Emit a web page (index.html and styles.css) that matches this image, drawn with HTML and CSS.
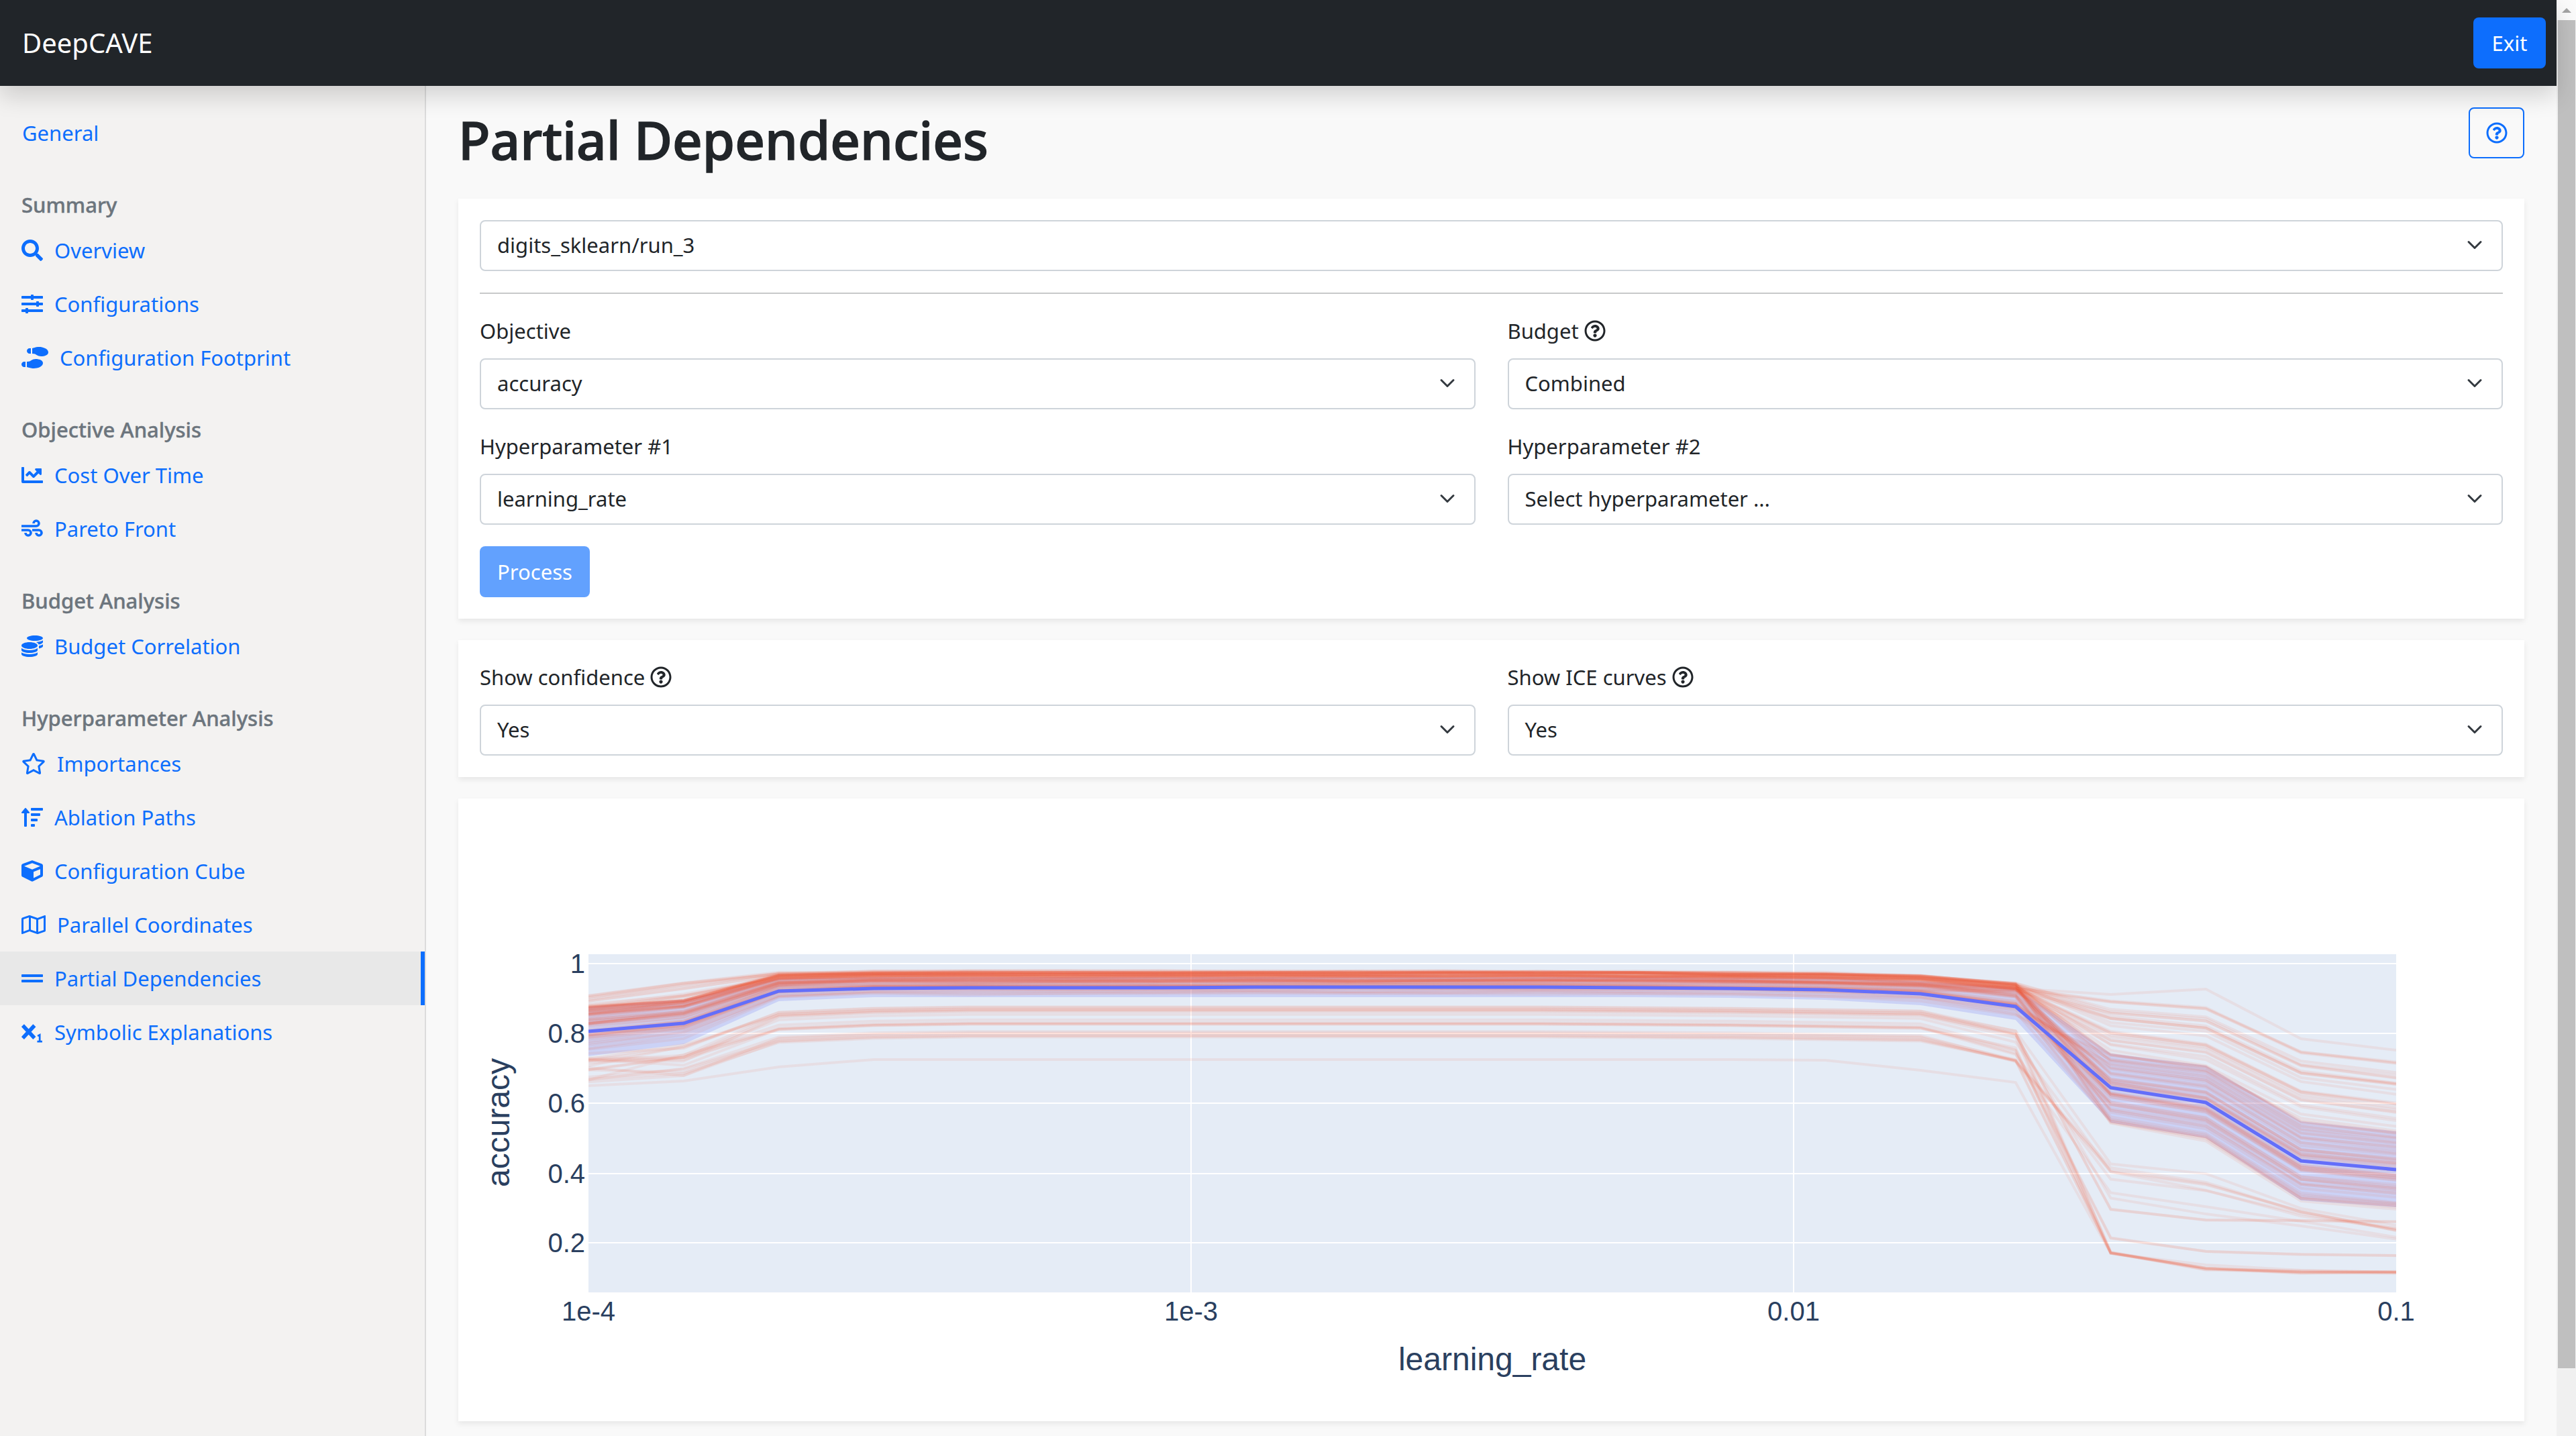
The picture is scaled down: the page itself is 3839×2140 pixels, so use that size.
FILE: index.html
```html
<!DOCTYPE html>
<html lang="en">
<head>
  <meta charset="UTF-8">
  <title>DeepCAVE - Partial Dependencies</title>
  <link rel="stylesheet" href="styles.css">
</head>
<body>
  <svg class="icon-defs" width="0" height="0">
    <symbol id="i-help" viewBox="0 0 512 512"><path d="M256 8C119.043 8 8 119.083 8 256c0 136.997 111.043 248 248 248s248-111.003 248-248C504 119.083 392.957 8 256 8zm0 448c-110.532 0-200-89.431-200-200 0-110.495 89.472-200 200-200 110.491 0 200 89.471 200 200 0 110.53-89.431 200-200 200zm107.244-255.2c0 67.052-72.421 68.084-72.421 92.863V300c0 6.627-5.373 12-12 12h-45.647c-6.627 0-12-5.373-12-12v-8.659c0-35.745 27.1-50.034 47.579-61.516 17.561-9.845 28.324-16.541 28.324-29.579 0-17.246-21.999-28.693-39.784-28.693-23.189 0-33.894 10.977-48.942 29.969-4.057 5.12-11.46 6.071-16.666 2.124l-27.824-21.098c-5.107-3.872-6.251-11.066-2.644-16.363C184.846 131.491 214.94 112 261.794 112c49.071 0 101.45 38.304 101.45 88.8zM298 368c0 23.159-18.841 42-42 42s-42-18.841-42-42 18.841-42 42-42 42 18.841 42 42z"/></symbol>
    <symbol id="i-chevron" viewBox="0 0 16 16"><path d="M2 5l6 6 6-6" fill="none" stroke="#343a40" stroke-width="2" stroke-linecap="round" stroke-linejoin="round"/></symbol>
  </svg>

  <div class="page">
    <header class="topbar">
      <span class="brand">DeepCAVE</span>
      <button class="btn-exit">Exit</button>
    </header>

    <div class="layout">
      <nav class="sidebar">
        <a class="nav-link">General</a>

        <h6 class="nav-heading">Summary</h6>
        <a class="nav-link"><svg class="nav-icon w32" viewBox="0 0 512 512"><path d="M505 442.7L405.3 343c-4.5-4.5-10.6-7-17-7H372c27.6-35.3 44-79.7 44-128C416 93.1 322.9 0 208 0S0 93.1 0 208s93.1 208 208 208c48.3 0 92.7-16.4 128-44v16.3c0 6.4 2.5 12.5 7 17l99.7 99.7c9.4 9.4 24.6 9.4 33.9 0l28.3-28.3c9.4-9.4 9.4-24.6.1-34zM208 336c-70.7 0-128-57.2-128-128 0-70.7 57.2-128 128-128 70.7 0 128 57.2 128 128 0 70.7-57.2 128-128 128z"/></svg>Overview</a>
        <a class="nav-link"><svg class="nav-icon w32" viewBox="0 0 512 512"><path d="M496 384H160v-16c0-8.8-7.2-16-16-16h-32c-8.8 0-16 7.2-16 16v16H16c-8.8 0-16 7.2-16 16v32c0 8.8 7.2 16 16 16h80v16c0 8.8 7.2 16 16 16h32c8.8 0 16-7.2 16-16v-16h336c8.8 0 16-7.2 16-16v-32c0-8.8-7.2-16-16-16zm0-160h-80v-16c0-8.8-7.2-16-16-16h-32c-8.8 0-16 7.2-16 16v16H16c-8.8 0-16 7.2-16 16v32c0 8.8 7.2 16 16 16h336v16c0 8.8 7.2 16 16 16h32c8.8 0 16-7.2 16-16v-16h80c8.8 0 16-7.2 16-16v-32c0-8.8-7.2-16-16-16zm0-160H288V48c0-8.8-7.2-16-16-16h-32c-8.8 0-16 7.2-16 16v16H16C7.2 64 0 71.2 0 80v32c0 8.8 7.2 16 16 16h208v16c0 8.8 7.2 16 16 16h32c8.8 0 16-7.2 16-16v-16h208c8.8 0 16-7.2 16-16V80c0-8.8-7.2-16-16-16z"/></svg>Configurations</a>
        <a class="nav-link"><svg class="nav-icon w40" viewBox="0 0 640 512"><path d="M192 160h32V32h-32c-35.35 0-64 28.65-64 64s28.65 64 64 64zM0 416c0 35.35 28.65 64 64 64h32V352H64c-35.35 0-64 28.65-64 64zm337.46-128c-34.91 0-76.16 13.12-104.73 32-24.79 16.38-44.52 32-104.73 32v128l57.53 15.97c26.21 7.28 53.01 13.12 80.31 15.05 32.69 2.31 65.6.67 97.58-6.2C472.9 481.3 512 429.22 512 384c0-64-84.01-96-174.54-96zM491.42 7.19C459.44.32 426.53-1.33 393.84.99c-27.3 1.93-54.1 7.77-80.31 15.04L256 32v128c60.2 0 79.94 15.62 104.73 32 28.57 18.88 69.82 32 104.73 32C555.99 224 640 192 640 128c0-45.22-39.1-97.3-148.58-120.81z"/></svg>Configuration Footprint</a>

        <h6 class="nav-heading">Objective Analysis</h6>
        <a class="nav-link"><svg class="nav-icon w32" viewBox="0 0 512 512"><path d="M496 384H64V80c0-8.84-7.16-16-16-16H16C7.16 64 0 71.16 0 80v336c0 17.67 14.33 32 32 32h464c8.84 0 16-7.16 16-16v-32c0-8.84-7.16-16-16-16zM464 96H345.94c-21.38 0-32.09 25.85-16.97 40.97l32.4 32.4L288 242.75l-73.37-73.37c-12.5-12.5-32.76-12.5-45.25 0l-68.69 68.69c-6.25 6.25-6.25 16.38 0 22.63l22.62 22.62c6.25 6.25 16.38 6.25 22.63 0L192 237.25l73.37 73.37c12.5 12.5 32.76 12.5 45.25 0l96-96 32.4 32.4c15.12 15.12 40.97 4.41 40.97-16.97V112c.01-8.84-7.15-16-15.99-16z"/></svg>Cost Over Time</a>
        <a class="nav-link"><svg class="nav-icon w32" viewBox="0 0 512 512"><path class="stroke-icon" d="M0 192H352a64 64 0 1 0-64-64M0 288H160a64 64 0 1 1-64 64M256 288H416a64 64 0 1 1-64 64"/></svg>Pareto Front</a>

        <h6 class="nav-heading">Budget Analysis</h6>
        <a class="nav-link"><svg class="nav-icon w32" viewBox="0 0 512 512"><path d="M0 405.3V448c0 35.3 86 64 192 64s192-28.7 192-64v-42.7C342.7 434.4 267.2 448 192 448S41.3 434.4 0 405.3zM320 128c106 0 192-28.7 192-64S426 0 320 0 128 28.7 128 64s86 64 192 64zM0 300.4V352c0 35.3 86 64 192 64s192-28.7 192-64v-51.6c-41.3 34-116.9 51.6-192 51.6S41.3 334.4 0 300.4zm416 11c57.3-11.1 96-31.7 96-55.4v-42.7c-23.2 16.4-57.3 27.6-96 34.5v63.6zM192 160C86 160 0 195.8 0 240s86 80 192 80 192-35.8 192-80-86-80-192-80zm219.3 56.3c60-10.8 100.7-32 100.7-56.3v-42.7c-35.5 25.1-96.5 38.6-160.7 41.8 29.5 14.3 51.2 33.5 60 57.2z"/></svg>Budget Correlation</a>

        <h6 class="nav-heading">Hyperparameter Analysis</h6>
        <a class="nav-link"><svg class="nav-icon w36" viewBox="0 0 576 512"><path d="M528.1 171.5L382 150.2 316.7 17.8c-11.7-23.6-45.6-23.9-57.4 0L194 150.2 47.9 171.5c-26.2 3.8-36.7 36.1-17.7 54.6l105.7 103-25 145.5c-4.5 26.3 23.2 46 46.4 33.7L288 439.6l130.7 68.7c23.2 12.2 50.9-7.4 46.4-33.7l-25-145.5 105.7-103c19-18.5 8.5-50.8-17.7-54.6zM388.6 312.3l23.7 138.4L288 385.4l-124.3 65.3 23.7-138.4-100.6-98 139-20.2 62.2-126 62.2 126 139 20.2-100.6 98z"/></svg>Importances</a>
        <a class="nav-link"><svg class="nav-icon w32" viewBox="0 0 512 512"><path d="M304 416h-64a16 16 0 0 0-16 16v32a16 16 0 0 0 16 16h64a16 16 0 0 0 16-16v-32a16 16 0 0 0-16-16zM16 160h48v304a16 16 0 0 0 16 16h32a16 16 0 0 0 16-16V160h48c14.21 0 21.39-17.24 11.31-27.31l-80-96a16 16 0 0 0-22.62 0l-80 96C-5.35 142.74 1.78 160 16 160zm416 0H240a16 16 0 0 0-16 16v32a16 16 0 0 0 16 16h192a16 16 0 0 0 16-16v-32a16 16 0 0 0-16-16zm-64 128H240a16 16 0 0 0-16 16v32a16 16 0 0 0 16 16h128a16 16 0 0 0 16-16v-32a16 16 0 0 0-16-16zM496 32H240a16 16 0 0 0-16 16v32a16 16 0 0 0 16 16h256a16 16 0 0 0 16-16V48a16 16 0 0 0-16-16z"/></svg>Ablation Paths</a>
        <a class="nav-link"><svg class="nav-icon w32" viewBox="0 0 512 512"><path d="M239.1 6.3l-208 78c-18.7 7-31.1 25-31.1 45v225.1c0 18.2 10.3 34.8 26.5 42.9l208 104c13.5 6.8 29.4 6.8 42.9 0l208-104c16.3-8.1 26.5-24.8 26.5-42.9V129.3c0-20-12.4-37.9-31.1-44.9l-208-78C262 2.2 250 2.2 239.1 6.3zM256 68.4l192 72v1.1l-192 78-192-78v-1.1l192-72zm32 356V275.5l160-65v133.9l-160 80z"/></svg>Configuration Cube</a>
        <a class="nav-link"><svg class="nav-icon w36" viewBox="0 0 576 512"><path d="M560.02 32c-1.96 0-3.98.37-5.96 1.16L384.01 96H384L212 35.28A64.252 64.252 0 0 0 191.76 32c-6.69 0-13.37 1.05-19.81 3.14L20.12 87.95A32.006 32.006 0 0 0 0 117.66v346.32C0 473.17 7.53 480 15.99 480c1.96 0 3.97-.37 5.96-1.16L192 416l172 60.71a63.98 63.98 0 0 0 40.05.15l151.83-52.81A31.996 31.996 0 0 0 576 394.34V48.02c0-9.19-7.53-16.02-15.98-16.02zM224 90.42l128 45.19v285.97l-128-45.19V90.42zM48 418.05V129.07l128-44.53v286.2l-.64.23L48 418.05zm480-35.13l-128 44.53V141.26l.64-.24L528 93.95v288.97z"/></svg>Parallel Coordinates</a>
        <a class="nav-link active"><svg class="nav-icon w32" viewBox="0 0 512 512"><path d="M496 288H16c-8.8 0-16 7.2-16 16v32c0 8.8 7.2 16 16 16h480c8.8 0 16-7.2 16-16v-32c0-8.8-7.2-16-16-16zm0-128H16c-8.8 0-16 7.2-16 16v32c0 8.8 7.2 16 16 16h480c8.8 0 16-7.2 16-16v-32c0-8.8-7.2-16-16-16z"/></svg>Partial Dependencies</a>
        <a class="nav-link"><svg class="nav-icon w32" viewBox="0 0 512 512"><path class="stroke-icon bold" d="M30 100L310 400M310 100L30 400"/><path class="stroke-icon thin" d="M385 350L435 325V480M375 480H495"/></svg>Symbolic Explanations</a>
      </nav>

      <main class="content">
        <div class="title-row">
          <h1>Partial Dependencies</h1>
          <button class="btn-help"><svg class="help-icon"><use href="#i-help"/></svg></button>
        </div>

        <section class="card">
          <div class="select-box"><span>digits_sklearn/run_3</span><svg class="chevron"><use href="#i-chevron"/></svg></div>
          <hr>
          <div class="field-grid">
            <div>
              <label>Objective</label>
              <div class="select-box"><span>accuracy</span><svg class="chevron"><use href="#i-chevron"/></svg></div>
            </div>
            <div>
              <label>Budget <svg class="label-help"><use href="#i-help"/></svg></label>
              <div class="select-box"><span>Combined</span><svg class="chevron"><use href="#i-chevron"/></svg></div>
            </div>
            <div>
              <label>Hyperparameter #1</label>
              <div class="select-box"><span>learning_rate</span><svg class="chevron"><use href="#i-chevron"/></svg></div>
            </div>
            <div>
              <label>Hyperparameter #2</label>
              <div class="select-box"><span>Select hyperparameter ...</span><svg class="chevron"><use href="#i-chevron"/></svg></div>
            </div>
          </div>
          <button class="btn-process">Process</button>
        </section>

        <section class="card">
          <div class="field-grid">
            <div>
              <label>Show confidence <svg class="label-help"><use href="#i-help"/></svg></label>
              <div class="select-box"><span>Yes</span><svg class="chevron"><use href="#i-chevron"/></svg></div>
            </div>
            <div>
              <label>Show ICE curves <svg class="label-help"><use href="#i-help"/></svg></label>
              <div class="select-box"><span>Yes</span><svg class="chevron"><use href="#i-chevron"/></svg></div>
            </div>
          </div>
        </section>

        <section class="card card-graph">
          <!-- viewBox uses page coordinates, the graph fills the whole card -->
          <svg class="graph" viewBox="683 1190 3079 928">
            <defs><clipPath id="plot-clip"><rect x="877" y="1422" width="2694" height="504"/></clipPath></defs>
            <rect class="plot-bg" x="877" y="1422" width="2694" height="504"/>
            <path class="grid" d="M877 1436H3571M877 1540H3571M877 1644H3571M877 1749H3571M877 1852H3571M1775 1422V1926M2673 1422V1926"/>
            <g id="curves" clip-path="url(#plot-clip)"></g>
            <g class="y-ticks">
              <text x="872" y="1450">1</text>
              <text x="872" y="1554">0.8</text>
              <text x="872" y="1658">0.6</text>
              <text x="872" y="1763">0.4</text>
              <text x="872" y="1866">0.2</text>
            </g>
            <g class="x-ticks">
              <text x="877" y="1968">1e-4</text>
              <text x="1775" y="1968">1e-3</text>
              <text x="2673" y="1968">0.01</text>
              <text x="3571" y="1968">0.1</text>
            </g>
            <text class="axis-title" x="2224" y="2042">learning_rate</text>
            <text class="axis-title" transform="translate(759 1673) rotate(-90)">accuracy</text>
          </svg>
        </section>
      </main>
    </div>
  </div>

  <div class="scrollbar">
    <div class="scroll-up"><span class="scroll-arrow"></span></div>
    <div class="scroll-thumb"></div>
  </div>

  <script src="chart.js"></script>
</body>
</html>
```

FILE: styles.css
```css
* {
  box-sizing: border-box;
}

html, body {
  height: 2140px;
  margin: 0;
  overflow: hidden;
}

body {
  display: flex;
  font-family: "Noto Sans", "Open Sans", sans-serif;
  font-size: 31px;
  line-height: 48px;
  color: #212529;
  background: #f9f9f9;
}

.icon-defs {
  position: absolute;
}

.page {
  width: 3810px;
  height: 2140px;
  display: flex;
  flex-direction: column;
}

/* top bar */
.topbar {
  position: relative;
  z-index: 2;
  height: 128px;
  flex: none;
  display: flex;
  align-items: center;
  justify-content: space-between;
  padding: 0 16px 0 33px;
  background: #212529;
  box-shadow: 0 16px 32px rgba(0,0,0,0.15);
}

.brand {
  font-size: 40px;
  color: white;
}

.btn-exit {
  width: 108px;
  height: 76px;
  padding: 0;
  border: none;
  border-radius: 8px;
  background: #0d6efd;
  color: white;
  font: inherit;
}

.layout {
  flex: 1;
  display: flex;
  min-height: 0;
}

/* sidebar */
.sidebar {
  width: 635px;
  flex: none;
  padding-top: 30px;
  background: #f3f2f1;
  border-right: 2px solid #dcdcdc;
}

.nav-link {
  height: 80px;
  display: flex;
  align-items: center;
  gap: 16px;
  padding-left: 33px;
  color: #0d6efd;
}

.nav-link.active {
  background: #e8e8e8;
  border-right: 6px solid #0d6efd;
}

.nav-heading {
  height: 55px;
  margin: 40px 0 0;
  padding: 3px 0 0 32px;
  font-size: 31px;
  font-weight: 500;
  color: #6c757d;
  -webkit-text-stroke: 0.4px #6c757d;
}

.nav-icon {
  height: 32px;
  flex: none;
  margin-left: -1px;
  margin-right: 1px;
  fill: #0d6efd;
}

.w32 { width: 32px; }
.w36 { width: 36px; }
.w40 { width: 40px; }

.stroke-icon {
  fill: none;
  stroke: #0d6efd;
  stroke-width: 58;
}

.stroke-icon.bold { stroke-width: 90; }
.stroke-icon.thin { stroke-width: 44; }

/* main column */
.content {
  flex: 1;
  min-width: 0;
  padding: 32px 48px 0;
}

.title-row {
  display: flex;
  justify-content: space-between;
  align-items: flex-start;
  margin-bottom: 40px;
}

h1 {
  margin: 0;
  font-size: 78px;
  line-height: 96px;
  font-weight: 500;
  -webkit-text-stroke: 1.4px #212529;
}

.btn-help {
  width: 83px;
  height: 76px;
  display: flex;
  align-items: center;
  justify-content: center;
  padding: 0;
  background: transparent;
  border: 2px solid #0d6efd;
  border-radius: 8px;
}

.help-icon {
  width: 32px;
  height: 32px;
  fill: #0d6efd;
}

.card {
  padding: 32px;
  margin-bottom: 32px;
  background: white;
  box-shadow: 0 4px 8px rgba(0,0,0,0.075);
}

hr {
  height: 2px;
  margin: 32px 0;
  border: none;
  background: #c8c9ca;
}

.field-grid {
  display: grid;
  grid-template-columns: 1fr 1fr;
  column-gap: 48px;
  row-gap: 32px;
}

label {
  display: flex;
  align-items: center;
  gap: 8px;
  height: 48px;
  margin-bottom: 16px;
  padding-bottom: 2px;
}

.label-help {
  width: 32px;
  height: 32px;
  fill: #212529;
}

.select-box {
  height: 76px;
  display: flex;
  align-items: center;
  justify-content: space-between;
  padding: 0 28px 2px 24px;
  background: white;
  border: 2px solid #ced4da;
  border-radius: 8px;
}

.chevron {
  width: 24px;
  height: 24px;
}

.btn-process {
  display: block;
  width: 164px;
  height: 76px;
  margin-top: 32px;
  padding: 0;
  border: none;
  border-radius: 8px;
  background: #62a1fe;
  color: white;
  font: inherit;
}

.card-graph {
  height: 928px;
  padding: 0;
}

/* graph */
.graph {
  display: block;
  width: 3079px;
  height: 928px;
  font-family: "Liberation Sans", sans-serif;
  fill: #2a3f5f;
}

.plot-bg {
  fill: #e5ecf6;
}

.grid {
  fill: none;
  stroke: white;
  stroke-width: 2;
}

.y-ticks text {
  font-size: 40px;
  text-anchor: end;
}

.x-ticks text {
  font-size: 40px;
  text-anchor: middle;
}

.axis-title {
  font-size: 48px;
  text-anchor: middle;
}

.band {
  fill: rgba(99,110,250,0.2);
  stroke: none;
}

.ice-line {
  fill: none;
  stroke: rgba(239,85,59,0.09);
  stroke-width: 4;
}

.mean-line {
  fill: none;
  stroke: #636efa;
  stroke-width: 5;
}

/* fake browser scrollbar */
.scrollbar {
  width: 29px;
  height: 2140px;
  flex: none;
  padding-left: 2px;
  background: #f0f0f0;
}

.scroll-up {
  height: 30px;
  margin-left: -2px;
  display: flex;
  align-items: center;
  justify-content: center;
  background: #fafafa;
}

.scroll-arrow {
  width: 0;
  height: 0;
  border-left: 7px solid transparent;
  border-right: 7px solid transparent;
  border-bottom: 7px solid #a3a3a3;
}

.scroll-thumb {
  width: 26px;
  height: 2009px;
  background: #bfbfbf;
}
```

FILE: chart.js
```js
// ICE curves + mean + confidence band for the partial dependence graph
const SVG_NS = "http://www.w3.org/2000/svg";
const curves = document.getElementById("curves");

function knotX(i) {
  return 877 + (2694 / 19) * i;
}

function points(ys) {
  return ys.map((y, i) => knotX(i).toFixed(1) + "," + y.toFixed(1)).join(" ");
}

function addShape(tag, cls, pts) {
  const el = document.createElementNS(SVG_NS, tag);
  el.setAttribute("class", cls);
  el.setAttribute("points", pts);
  curves.appendChild(el);
}

// small seeded generator so the picture is the same on every load
let seed = 1234567;
function rand() {
  seed = (seed * 16807) % 2147483647;
  return seed / 2147483647;
}

const mean = [1537,1525,1477,1473,1472,1472,1472,1471,1471,1471,1471,1472,1473,1475,1481,1500,1621,1643,1730,1743];
const bandTop = [1500,1490,1458,1456,1456,1456,1456,1456,1456,1456,1456,1456,1457,1458,1462,1472,1570,1588,1671,1686];
const bandBottom = [1574,1556,1492,1486,1486,1486,1486,1486,1486,1486,1486,1486,1487,1490,1498,1520,1673,1696,1789,1799];

addShape("polygon", "band", points(bandTop) + " " + bandBottom.map((y, i) => knotX(i).toFixed(1) + "," + y).reverse().join(" "));

function family(count, top, bottom, skew, split) {
  for (let n = 0; n < count; n++) {
    const t = Math.pow(rand(), skew);
    const t2 = rand();
    const ys = top.map((hi, i) => {
      const pos = i >= split ? t2 : t;
      return hi + (bottom[i] - hi) * pos + (rand() - 0.5) * 3;
    });
    addShape("polyline", "ice-line", points(ys));
  }
}

// a curve on the low plateau: the left part is free, the tail is given (knots 16-19)
function lowCurve(tail, jitter) {
  const p = 1498 + rand() * 48;
  const ys = [p + 50 + rand() * 35, p + 45 + rand() * 30, p + 8, p + 2, p, p, p, p, p, p, p, p + 1, p + 2, p + 4, p + 6, p + 32 + rand() * 14];
  tail.forEach((y) => ys.push(y + (rand() - 0.5) * jitter));
  addShape("polyline", "ice-line", points(ys));
}

// main bundle, follows the confidence band
family(52,
  [1500,1490,1452,1449,1449,1449,1449,1449,1449,1449,1449,1449,1450,1451,1454,1466,1572,1590,1672,1688],
  [1578,1558,1495,1488,1488,1488,1488,1488,1488,1488,1488,1488,1489,1493,1498,1522,1675,1700,1790,1802],
  1.7, 16);

// curves that stay high on the right
family(24,
  [1484,1464,1450,1448,1447,1447,1447,1447,1447,1447,1447,1448,1449,1450,1455,1466,1484,1492,1556,1572],
  [1540,1525,1472,1468,1468,1468,1468,1468,1468,1468,1468,1468,1468,1470,1476,1478,1572,1595,1668,1688],
  1.5, 16);
addShape("polyline", "ice-line", points([1496,1484,1456,1452,1452,1452,1452,1453,1453,1453,1454,1455,1456,1458,1462,1473,1482,1474,1548,1565]));

// low plateau, falling hard after the knee
for (let n = 0; n < 7; n++) lowCurve([1868,1892,1895,1896], 5);
for (let n = 0; n < 2; n++) lowCurve([1845,1866,1870,1871], 3);
for (let n = 0; n < 2; n++) lowCurve([1802,1818,1820,1820], 3);
for (let n = 0; n < 8; n++) {
  const t = rand();
  lowCurve([1728 + t * 60, 1744 + t * 70, 1800 + t * 25, 1825 + t * 25], 8);
}

// the one curve far below the others
addShape("polyline", "ice-line", points([1618,1611,1590,1579,1579,1579,1579,1579,1579,1579,1579,1579,1579,1580,1595,1613,1868,1885,1893,1896]));

addShape("polyline", "mean-line", points(mean));
```
